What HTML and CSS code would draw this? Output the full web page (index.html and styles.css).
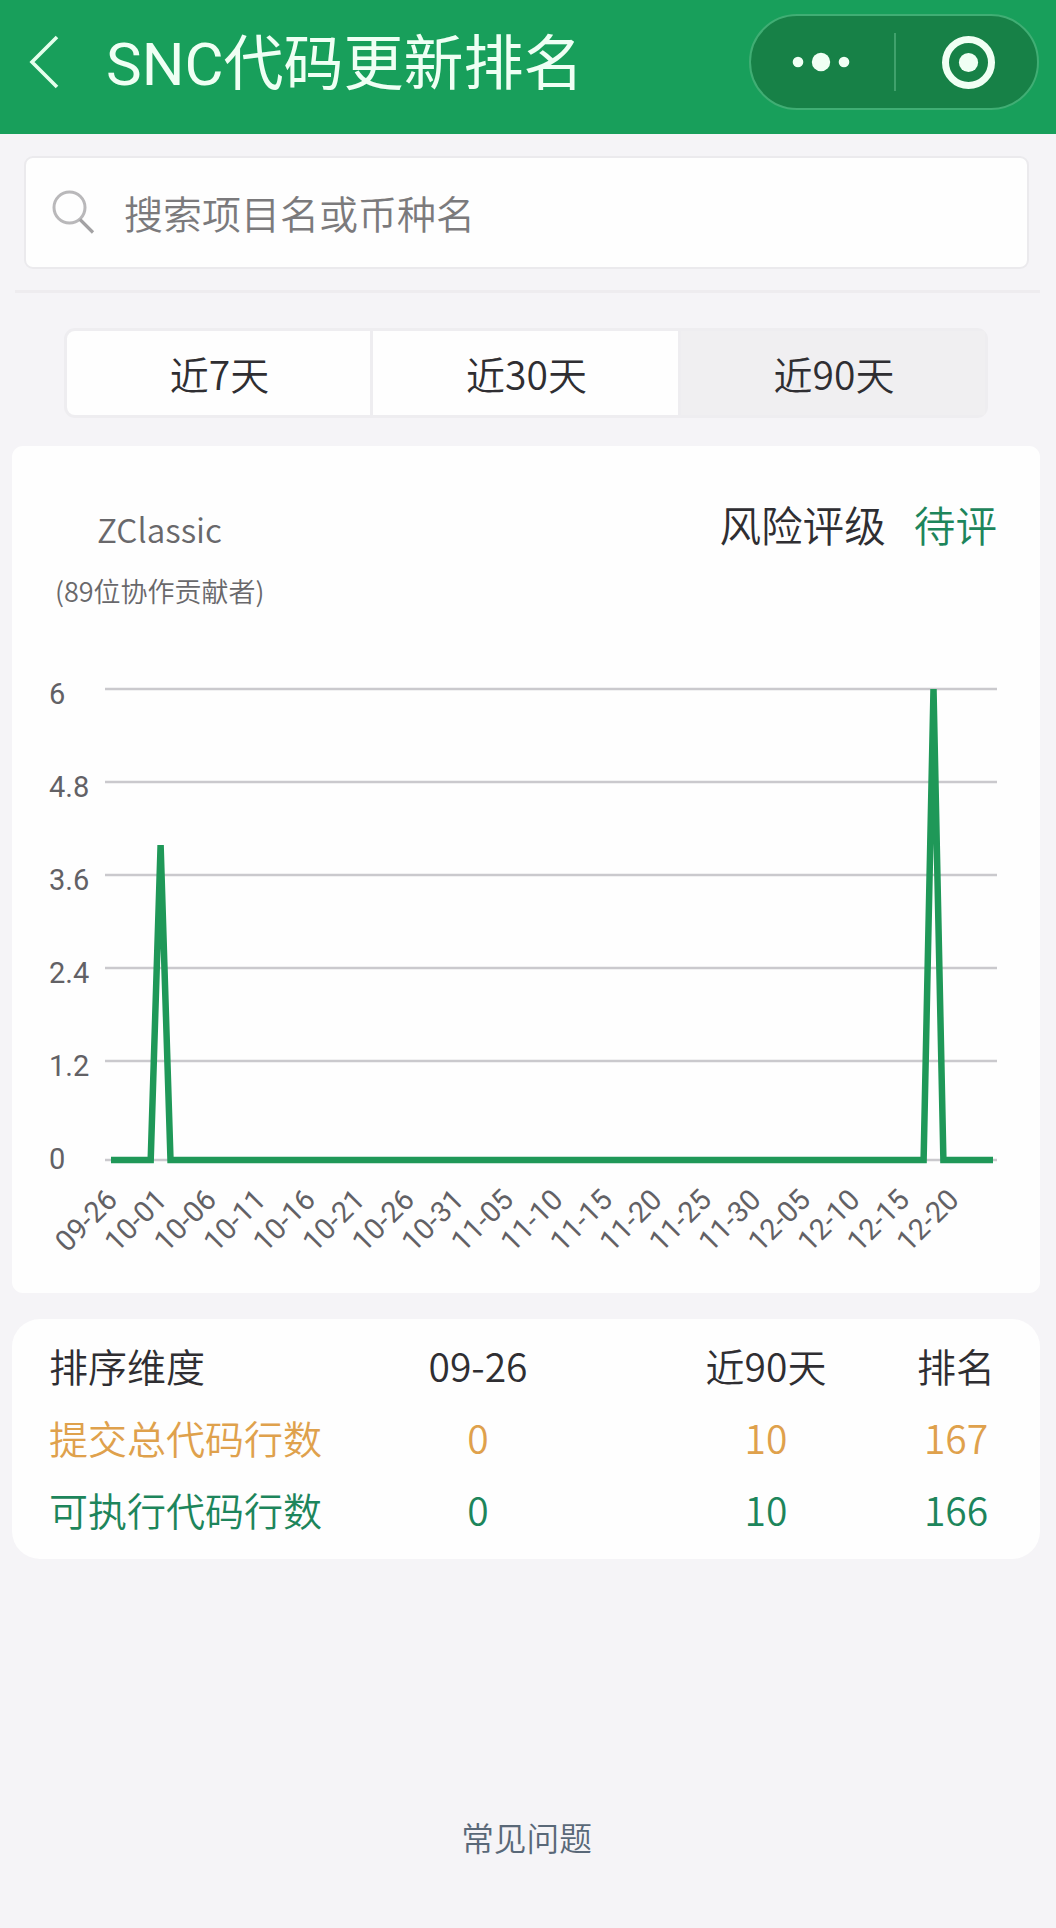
FILE: index.html
```html
<!DOCTYPE html>
<html lang="zh-CN">
<head>
<meta charset="utf-8">
<title>SNC代码更新排名</title>
<link rel="stylesheet" href="styles.css">
</head>
<body>
<header class="navbar">
  <svg class="back" width="34" height="60" viewBox="0 0 34 60"><path d="M31 5 L6 30 L31 55" fill="none" stroke="#e4ffec" stroke-width="3.600"/></svg>
  <h1 class="title">SNC代码更新排名</h1>
  <div class="capsule">
    <svg class="capsule-icon" width="143" height="92" viewBox="0 0 143 92"><g fill="#f0fff4"><circle cx="47" cy="46" r="5.300"/><circle cx="70" cy="46" r="9.200"/><circle cx="93" cy="46" r="5.300"/></g></svg>
    <span class="capsule-line"></span>
    <svg class="capsule-icon" width="141" height="92" viewBox="0 0 141 92"><circle cx="72.500" cy="46.500" r="23" fill="none" stroke="#f0fff4" stroke-width="7"/><circle cx="72.500" cy="46.500" r="9.600" fill="#f0fff4"/></svg>
  </div>
</header>
<main class="page">
  <div class="search">
    <svg class="search-icon" width="46" height="46" viewBox="0 0 46 46" fill="none"><circle cx="19.500" cy="17.500" r="15.500" stroke="#b9b8ba" stroke-width="3"/><path d="M30 29.500 L43 42.500" stroke="#a3a2a4" stroke-width="3.200"/></svg>
    <span class="placeholder">搜索项目名或币种名</span>
  </div>
  <div class="rule"></div>
  <nav class="tabs">
    <span class="tab">近7天</span>
    <span class="tab">近30天</span>
    <span class="tab active">近90天</span>
  </nav>
  <section class="card chart-card">
    <div class="card-head">
      <div class="project">
        <div class="name">ZClassic</div>
        <div class="contributors">(89位协作贡献者)</div>
      </div>
      <div class="rating"><span>风险评级</span><span class="pending">待评</span></div>
    </div>
    <svg class="chart" width="1028" height="600" viewBox="12 660 1028 600">
      <path d="M105 689H997M105 782H997M105 875H997M105 968H997M105 1061H997M105 1160H997" stroke="#cac9cd" stroke-width="2.600"/>
      <path d="M111 1160H150.700L160.600 845L170.500 1160H923.600L933.500 689L943.400 1160H993" fill="none" stroke="#1f9858" stroke-width="6.500" stroke-linejoin="miter" stroke-miterlimit="4"/>
      <g class="y-labels">
        <text x="49" y="704">6</text>
        <text x="49" y="797">4.8</text>
        <text x="49" y="890">3.6</text>
        <text x="49" y="983">2.4</text>
        <text x="49" y="1076">1.2</text>
        <text x="49" y="1168.500">0</text>
      </g>
      <g class="x-labels">
        <text transform="translate(119 1201.500) rotate(-45)">09-26</text>
        <text transform="translate(168.500 1201.500) rotate(-45)">10-01</text>
        <text transform="translate(218 1201.500) rotate(-45)">10-06</text>
        <text transform="translate(267.500 1201.500) rotate(-45)">10-11</text>
        <text transform="translate(317 1201.500) rotate(-45)">10-16</text>
        <text transform="translate(366.500 1201.500) rotate(-45)">10-21</text>
        <text transform="translate(416 1201.500) rotate(-45)">10-26</text>
        <text transform="translate(465.500 1201.500) rotate(-45)">10-31</text>
        <text transform="translate(515 1201.500) rotate(-45)">11-05</text>
        <text transform="translate(564.500 1201.500) rotate(-45)">11-10</text>
        <text transform="translate(614 1201.500) rotate(-45)">11-15</text>
        <text transform="translate(663.500 1201.500) rotate(-45)">11-20</text>
        <text transform="translate(713 1201.500) rotate(-45)">11-25</text>
        <text transform="translate(762.500 1201.500) rotate(-45)">11-30</text>
        <text transform="translate(812 1201.500) rotate(-45)">12-05</text>
        <text transform="translate(861.500 1201.500) rotate(-45)">12-10</text>
        <text transform="translate(911 1201.500) rotate(-45)">12-15</text>
        <text transform="translate(960.500 1201.500) rotate(-45)">12-20</text>
      </g>
    </svg>
  </section>
  <section class="card ranks">
    <div class="row"><span class="dim">排序维度</span><span>09-26</span><span>近90天</span><span>排名</span></div>
    <div class="row orange"><span class="dim">提交总代码行数</span><span>0</span><span>10</span><span>167</span></div>
    <div class="row green"><span class="dim">可执行代码行数</span><span>0</span><span>10</span><span>166</span></div>
  </section>
</main>
<footer class="faq">常见问题</footer>
</body>
</html>
```
FILE: styles.css
```css
* {
  box-sizing: border-box;
}

body {
  margin: 0;
  width: 1056px;
  height: 1928px;
  overflow: hidden;
  background: #f5f4f7;
  color: #2f2e32;
  font-family: "Noto Sans CJK SC", sans-serif;
  font-weight: 350;
}

.navbar {
  display: flex;
  align-items: flex-start;
  height: 134px;
  padding: 14px 17px 0 26px;
  background: #189f5b;
}

.back {
  margin-top: 18px;
}

.title {
  margin: 11px 0 0 46px;
  font: 400 60px/80px Roboto, "Noto Sans CJK SC", sans-serif;
  color: #effff4;
  white-space: nowrap;
}

.capsule {
  display: flex;
  align-items: center;
  width: 290px;
  height: 96px;
  margin-left: auto;
  border: 2px solid #40ae74;
  border-radius: 48px;
  background: #178147;
}

.capsule-line {
  width: 2px;
  height: 58px;
  background: #40a16c;
}

.page {
  padding: 22px 16px 0 12px;
}

.search {
  display: flex;
  align-items: center;
  width: 1005px;
  height: 113px;
  margin-left: 12px;
  padding-left: 24px;
  border: 2px solid #ebeaed;
  border-radius: 9px;
  background: #fefefe;
}

.search-icon {
  flex: none;
}

.placeholder {
  margin: -2px 0 0 28px;
  font-size: 39px;
  line-height: 58px;
  color: #7b7a7c;
}

.rule {
  height: 3px;
  margin: 21px 0 35px 3px;
  background: #eeecef;
}

.tabs {
  display: grid;
  grid-template-columns: 306px 308px 1fr;
  width: 924px;
  height: 90px;
  margin: 0 0 28px 52px;
  border: 3px solid #eeedf0;
  border-radius: 11px;
  background: #fefefe;
}

.tab {
  font-size: 39px;
  line-height: 84px;
  text-align: center;
  border-right: 3px solid #eeedf0;
  padding-left: 2px;
}

.tab.active {
  background: #f0eff1;
  border-right: 0;
}

.card {
  background: #fefefe;
}

.chart-card {
  height: 847px;
  border-radius: 11px;
}

.card-head {
  display: flex;
  justify-content: space-between;
  height: 214px;
  padding: 56px 43px 0 43px;
}

.name {
  padding-left: 42px;
  font-size: 33.3px;
  line-height: 50px;
  margin-top: 2px;
  color: #69686b;
}

.contributors {
  margin-top: 19px;
  font-size: 27px;
  line-height: 36px;
  color: #69686b;
}

.rating {
  display: flex;
  gap: 28px;
  font-size: 41.6px;
  line-height: 44px;
}

.pending,
.green {
  color: #1d855b;
}

.chart {
  display: block;
}

.y-labels,
.x-labels {
  font-family: Roboto, sans-serif;
  font-size: 29px;
  font-weight: 400;
  fill: #626165;
}

.x-labels {
  text-anchor: end;
}

.ranks {
  height: 240px;
  margin-top: 26px;
  padding: 10px 0 0 37px;
  border-radius: 28px;
}

.row {
  display: grid;
  grid-template-columns: 284px 290px 286px 94px;
  font-size: 39px;
  line-height: 72px;
  text-align: center;
  white-space: nowrap;
}

.dim {
  text-align: left;
}

.orange {
  color: #dfa14c;
}

.faq {
  margin-top: 251px;
  padding-right: 3px;
  font-size: 32.7px;
  line-height: 54px;
  text-align: center;
  color: #596878;
}
```
